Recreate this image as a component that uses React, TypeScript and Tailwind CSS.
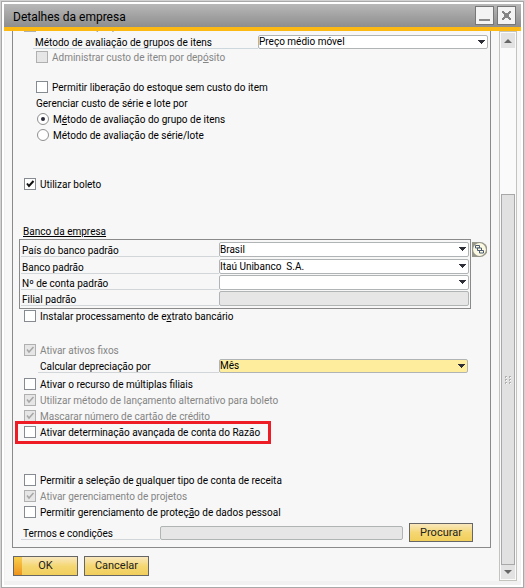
import React, { useId, useState } from "react";

function Arrow() {
  return (
    <svg viewBox="0 0 7 4" className="pointer-events-none absolute top-[5px] right-[3px] h-1 w-[7px] fill-[#2e2e38]" shapeRendering="crispEdges">
      <path d="M0 0h7v1H0zM1 1h5v1H1zM2 2h3v1H2zM3 3h1v1H3z" />
    </svg>
  );
}

type SelectProps = { id: string; value: string; tone?: string };

function Select({ id, value, tone = "bg-white" }: SelectProps) {
  return (
    <div className="relative min-w-0 flex-1 self-stretch">
      <select
        id={id}
        defaultValue={value}
        className={`block h-full w-full appearance-none rounded-xs border border-[#b0b4b4] text-[10px] leading-3 text-black outline-none ${tone}`}
      >
        <option>{value}</option>
      </select>
      <Arrow />
    </div>
  );
}

type CheckProps = { children: React.ReactNode; checked?: boolean; disabled?: boolean; className?: string };

function Check({ children, checked = false, disabled = false, className = "" }: CheckProps) {
  const [on, setOn] = useState(checked);
  return (
    <label className={`flex h-4 items-center gap-1 ${disabled ? "text-[#858585]" : "text-black"} ${className}`}>
      <span className="relative size-3 shrink-0">
        <input
          type="checkbox"
          checked={on}
          disabled={disabled}
          onChange={() => setOn(!on)}
          className="block size-3 appearance-none border border-[#858b90] bg-white disabled:border-[#b0b0b0] disabled:bg-[#e6e6e6]"
        />
        {on && (
          <svg viewBox="0 0 12 12" className="pointer-events-none absolute inset-0 size-3" fill="none" stroke={disabled ? "#a6a6a6" : "#111"} strokeWidth={disabled ? 1.5 : 2}>
            <path d="M3 5.5 5 8l4.5-5" />
          </svg>
        )}
      </span>
      <span className="pt-0.5 whitespace-nowrap">{children}</span>
    </label>
  );
}

function Radio({ children, checked = false }: { children: React.ReactNode; checked?: boolean }) {
  return (
    <label className="flex h-4 items-center gap-1">
      <input
        type="radio"
        name="custo"
        defaultChecked={checked}
        className="grid size-3 appearance-none place-items-center rounded-full border border-[#8f8f8f] bg-white before:size-1 before:rounded-full before:bg-transparent checked:before:bg-[#2b2b3c]"
      />
      <span className="pt-0.5">{children}</span>
    </label>
  );
}

function BankField({ label, value, disabled = false }: { label: string; value?: string; disabled?: boolean }) {
  const id = useId();
  return (
    <div className="flex h-[15px]">
      <label htmlFor={id} className="w-[198px] shrink-0 border-b border-[#d2d6d8] pl-px leading-[18px]">
        {label}
      </label>
      {disabled ? (
        <input id={id} disabled className="min-w-0 flex-1 rounded-xs border border-[#b0b4b4] bg-[#e6e6e6]" />
      ) : (
        <Select id={id} value={value ?? ""} />
      )}
    </div>
  );
}

function LinkIcon() {
  return (
    <svg viewBox="0 0 15 15" className="size-[15px]">
      <path d="M0 0h8a7.5 7.5 0 0 1 0 15H0z" fill="#96968a" />
      <circle cx="7.5" cy="7.5" r="6.4" fill="#fbf9e2" />
      <g fill="#fbf9e2" stroke="#4b5a73">
        <path d="M3.5 3.5h4v2.5h-4z" />
        <path d="M5.5 6h4v2.5h-4z" />
        <path d="M7.5 8.5h4V11h-4z" />
      </g>
    </svg>
  );
}

const gold = "border border-[#666] bg-gradient-to-b from-[#f9e8bd] via-[#f5d772] to-[#f1cf5c] text-[11px] text-[#222]";

export default function App() {
  return (
    <div className="bg-[#d2d2d2] p-px font-['Roboto','Open_Sans',sans-serif] text-[10px] leading-4 text-black">
      <main className="border border-[#a8a8a8] bg-white p-0.5">
        <header className="flex h-[27px] items-center justify-between border-b-4 border-[#fdb913] bg-gradient-to-b from-[#b8b8b8] to-[#8e8e8e] pr-[5px] pl-[9px]">
          <h1 className="pt-0.5 text-[12px] leading-4">Detalhes da empresa</h1>
          <div className="flex gap-[3px]">
            <button aria-label="Minimizar" className="grid size-[19px] place-items-center border border-[#777] bg-[#f3f3f3]">
              <svg viewBox="0 0 17 17" className="size-[17px]"><path d="M3 12h11v2H3z" fill="#8a8a8a" /></svg>
            </button>
            <button aria-label="Fechar" className="grid size-[19px] place-items-center border border-[#777] bg-[#f3f3f3]">
              <svg viewBox="0 0 17 17" className="size-[17px]" fill="#858585" shapeRendering="crispEdges">
                <path d="M4 4h2v1h1v1h3V5h1V4h2v2h-1v1h-1v3h1v1h1v2h-2v-1h-1v-1H7v1H6v1H4v-2h1v-1h1V7H5V6H4z" />
              </svg>
            </button>
          </div>
        </header>

        <div className="flex border-x border-b-4 border-[#f1f1f1] bg-[#f7f7f7] pr-[3px] pl-[7px]">
          <div className="min-w-0 flex-1 pr-2 pb-[5px]">
            <section className="overflow-hidden border-x border-b border-[#8a8a8a]">
              <div className="-mt-[13px] pr-0.5 pb-1 pl-[11px]">
                <Check disabled>Utilizar estoque permanente</Check>
                <div className="flex h-[15px] pt-px pl-[9px]">
                  <label htmlFor="metodo" className="w-[225px] shrink-0 border-b border-[#ccd8de] pl-0.5 leading-[15px]">
                    Método de avaliação de grupos de itens
                  </label>
                  <Select id="metodo" value="Preço médio móvel" />
                </div>
                <div className="pl-3">
                  <Check disabled>Administrar custo de item por dep<u>ó</u>sito</Check>
                  <Check className="mt-3.5">Permitir liberação do estoque sem custo do item</Check>
                  <fieldset>
                    <legend className="h-4 leading-[18px]">Gerenciar custo de série e lote por</legend>
                    <div className="pl-px">
                      <Radio checked>M<u>é</u>todo de avaliação do grupo de itens</Radio>
                      <Radio>Método de avaliação de série/lote</Radio>
                    </div>
                  </fieldset>
                </div>
                <Check checked className="mt-[33px]">Utilizar boleto</Check>

                <h2 className="mt-[31px] -ml-px h-4 leading-[18px] underline underline-offset-1">Banco da empresa</h2>
                <div className="-ml-[5px] flex items-start gap-px">
                  <div className="flex min-w-0 flex-1 flex-col gap-px border border-[#8a8a8a] px-px pt-0.5 pb-0.5">
                    <BankField label="País do banco padrão" value="Brasil" />
                    <div />
                    <BankField label="Banco padrão" value={"Itaú Unibanco\u00a0 S.A."} />
                    <BankField label="Nº de conta padrão" />
                    <BankField label="Filial padrão" disabled />
                  </div>
                  <button aria-label="Detalhes do banco" className="mt-[3px] mr-px">
                    <LinkIcon />
                  </button>
                </div>
                <Check className="-mt-px">Instalar processamento de e<u>x</u>trato bancário</Check>

                <Check checked disabled className="mt-[18px]">Ativar ativos fixos</Check>
                <div className="mr-5 flex h-4 pt-px pb-px pl-3.5">
                  <label htmlFor="depreciacao" className="w-[181px] shrink-0 border-b border-[#d2d6d8] pl-0.5 leading-[15px]">
                    Calcular depreciação por
                  </label>
                  <Select id="depreciacao" value="Mês" tone="bg-[#feed9c]" />
                </div>
                <Check className="mt-0.5">Ativar o recurso de múltiplas filiais</Check>
                <Check checked disabled>Utilizar método de lançamento alternativo para boleto</Check>
                <Check checked disabled>Mascarar número de cartão de crédito</Check>
                <div className="relative w-fit">
                  <Check>Ativar determinação avançada de conta do Razão</Check>
                  <div className="pointer-events-none absolute -top-[3px] -right-[11px] -bottom-1 -left-[9px] border-3 border-[#ee1c24]" />
                </div>

                <Check className="mt-8">Permitir a seleção de <u>q</u>ualquer tipo de conta de receita</Check>
                <Check checked disabled>Ativar gerenciamento de projetos</Check>
                <Check>Permitir gerenciamento de proteç<u>ã</u>o de dados pessoal</Check>
                <div className="mt-[3px] mr-[15px] -ml-[3px] flex items-center pb-px">
                  <label htmlFor="termos" className="h-3.5 w-[139px] shrink-0 border-b border-[#d2d6d8] pl-0.5 leading-[15px]">
                    Termos e condições
                  </label>
                  <input id="termos" disabled className="h-3.5 min-w-0 flex-1 rounded-xs border border-[#b0b4b4] bg-[#e6e6e6]" />
                  <button className={`ml-1.5 h-[19px] w-16 leading-4 ${gold}`}>Procurar</button>
                </div>
              </div>
            </section>
            <footer className="mt-2 flex gap-1.5 pl-px">
              <button className={`relative h-5 w-[65px] ${gold}`}>
                <span className="absolute inset-y-0 left-0 w-2 bg-gradient-to-b from-[#f8cf4c] to-[#ee941c]" />
                OK
              </button>
              <button className={`h-5 w-[65px] ${gold}`}>Cancelar</button>
            </footer>
          </div>

          <div className="flex w-[18px] flex-col border border-[#c4c4bc] bg-[#fafafa] px-px py-px">
            <button aria-label="Rolar para cima" className="grid h-[15px] place-items-center bg-[#e2e2e2]">
              <svg viewBox="0 0 8 4" className="h-1 w-2" fill="#666"><path d="M4 0 8 4H0z" /></svg>
            </button>
            <div className="h-[146px]" />
            <div className="grid flex-1 place-items-center border border-[#a8a8a8] bg-[#e1e1e1]">
              <svg viewBox="0 0 6 8" className="h-2 w-1.5" fill="#fff" shapeRendering="crispEdges">
                <path d="M0 0h2v2H0zM4 0h2v2H4zM0 3h2v2H0zM4 3h2v2H4zM0 6h2v2H0zM4 6h2v2H4z" fill="#b0b0b0" />
                <path d="M1 1h1v1H1zM5 1h1v1H5zM1 4h1v1H1zM5 4h1v1H5zM1 7h1v1H1zM5 7h1v1H5z" />
              </svg>
            </div>
            <button aria-label="Rolar para baixo" className="grid h-[14px] place-items-center bg-[#e2e2e2]">
              <svg viewBox="0 0 8 4" className="h-1 w-2" fill="#666"><path d="M0 0h8L4 4z" /></svg>
            </button>
          </div>
        </div>
      </main>
    </div>
  );
}
